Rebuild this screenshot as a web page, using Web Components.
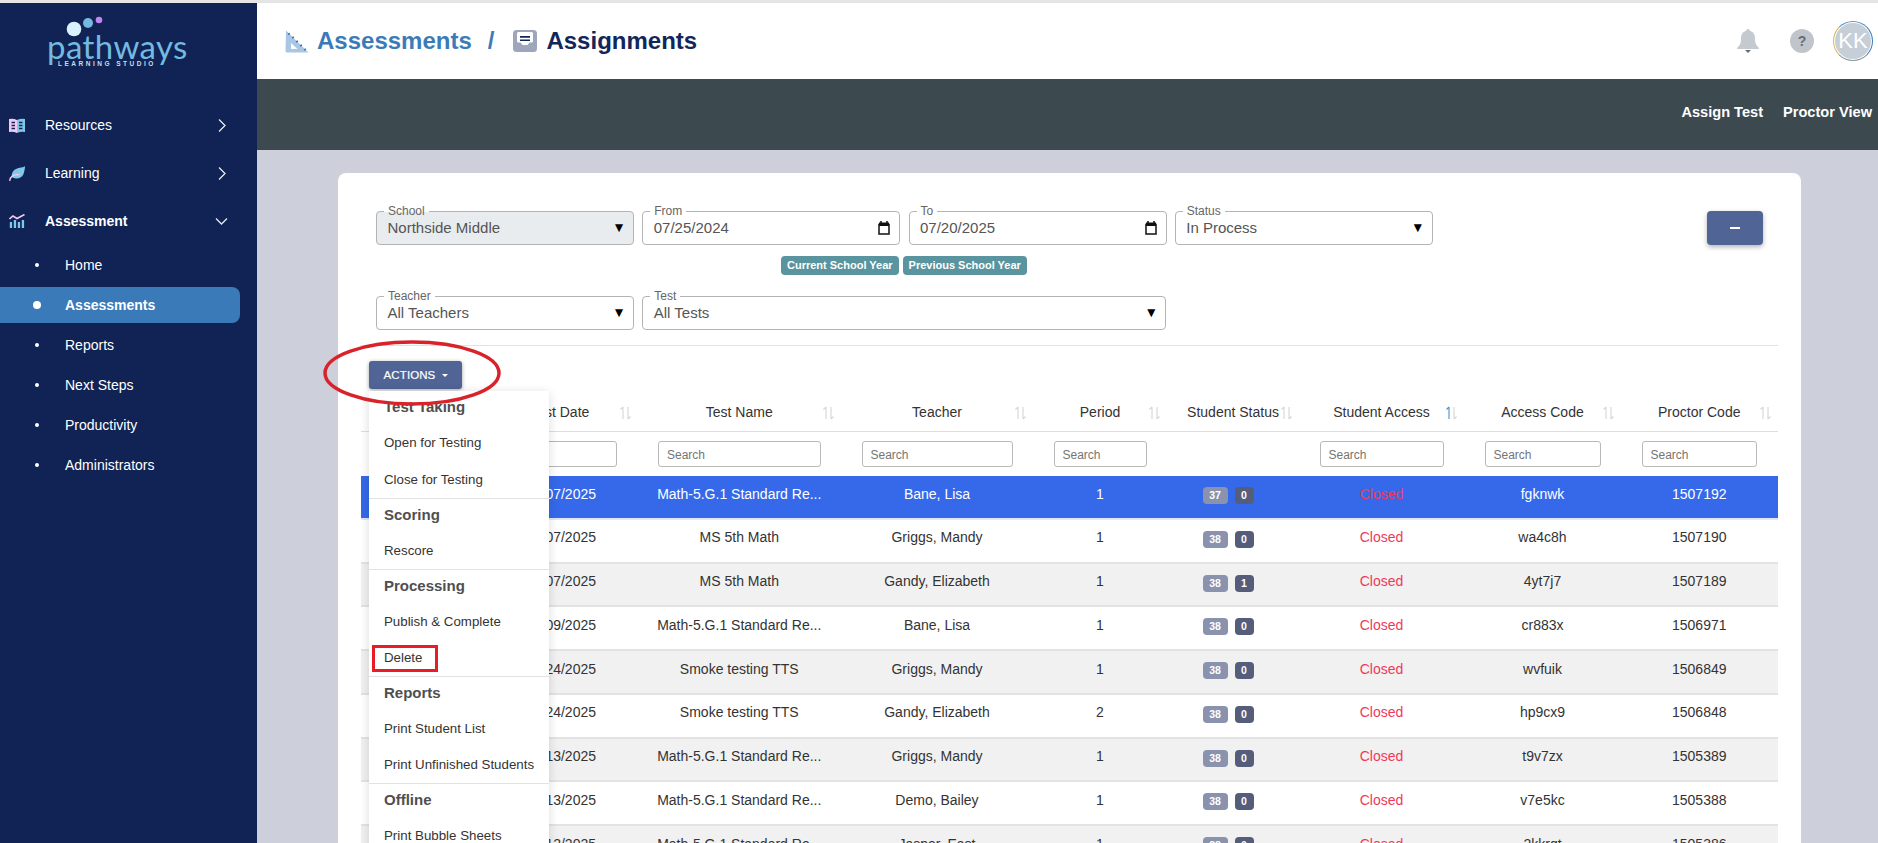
<!DOCTYPE html>
<html lang="en">
<head>
<meta charset="utf-8">
<title>Assignments</title>
<style>
  html, body { margin: 0; height: 843px; overflow: hidden; background: #cdcfdb; }
  body { font-family: "Liberation Sans", Arial, sans-serif; font-size: 14px; color: #333; }
  .app { display: grid; grid-template-columns: 257px 1fr; height: 840px; border-top: 3px solid #e5e5e5; }
  .main { min-width: 0; display: flex; flex-direction: column; }
</style>
</head>
<body>
<div class="app">
  <x-sidebar>
    <x-nav-item label="Resources" chevron="right">
      <svg slot="icon" width="16" height="15" viewBox="0 0 16 15">
        <path d="M0 1 Q4 0 8 2 V15 Q4 13 0 14 Z" fill="#f3c9f0"/>
        <path d="M16 1 Q12 0 8 2 V15 Q12 13 16 14 Z" fill="#7fc8ea"/>
        <path d="M2.500 4.500h3.500M2.500 7.500h3.500M2.500 10.500h3.500M10 4.500h3.500M10 7.500h3.500M10 10.500h3.500" stroke="#12265a" stroke-width="1.300"/>
      </svg>
    </x-nav-item>
    <x-nav-item label="Learning" chevron="right">
      <svg slot="icon" width="16" height="15" viewBox="0 0 16 15">
        <path d="M16 0 C15 2 10 1 7 3 C3 5 2 9 3.500 11.500 C8 14 13 12 14.500 8 C15.500 5 16 2 16 0 Z" fill="#7fc8ea"/>
        <path d="M0.700 15 C1 10.500 5 8.500 10 8.500" fill="none" stroke="#f3c9f0" stroke-width="1.300" stroke-linecap="round"/>
      </svg>
    </x-nav-item>
    <x-nav-item label="Assessment" chevron="down" bold>
      <svg slot="icon" width="16" height="14" viewBox="0 0 16 14">
        <path d="M0.500 5 L4 2 L8 4.500 L15.500 0.500" fill="none" stroke="#f3c9f0" stroke-width="1.600"/>
        <path d="M0.800 8h2.300v6H0.800zM4.800 6h2.300v8H4.800zM8.800 8h2.300v6H8.800zM12.800 6h2.300v8h-2.300z" fill="#7fc8ea"/>
      </svg>
    </x-nav-item>
    <x-nav-sub label="Home"></x-nav-sub>
    <x-nav-sub label="Assessments" active></x-nav-sub>
    <x-nav-sub label="Reports"></x-nav-sub>
    <x-nav-sub label="Next Steps"></x-nav-sub>
    <x-nav-sub label="Productivity"></x-nav-sub>
    <x-nav-sub label="Administrators"></x-nav-sub>
  </x-sidebar>
  <div class="main">
    <x-topbar></x-topbar>
    <x-subbar></x-subbar>
    <x-card>
      <x-filters></x-filters>
      <x-actions></x-actions>
      <x-assign-table></x-assign-table>
    </x-card>
  </div>
</div>

<script>
class XSidebar extends HTMLElement {
  constructor() {
    super();
    this.attachShadow({ mode: 'open' }).innerHTML = `
    <style>
      :host { display: block; background: #102354; overflow: hidden; }
      .logo { height: 98px; box-sizing: border-box; padding: 13px 0 0 47px; color: #74b9e0; }
      .dots { display: block; margin-left: 17px; }
      .word { font-family: Lato, "Open Sans", sans-serif; font-weight: 400; font-size: 33px; line-height: 30px; letter-spacing: 0.400px; margin-top: -11px; }
      .sub { font-size: 6.500px; font-weight: 700; letter-spacing: 2.500px; line-height: 8px; margin: -1px 0 0 11px; color: #c9dcec; }
    </style>
    <div class="logo">
      <svg class="dots" width="60" height="26" viewBox="0 0 60 26">
        <circle cx="10" cy="13" r="7.300" fill="#d9f2fb"/>
        <circle cx="24" cy="7" r="5" fill="#74b9e0"/>
        <circle cx="35" cy="4" r="3.300" fill="#c185ee"/>
      </svg>
      <div class="word">pathways</div>
      <div class="sub">LEARNING STUDIO</div>
    </div>
    <slot></slot>`;
  }
}

class XNavItem extends HTMLElement {
  constructor() {
    super();
    this.attachShadow({ mode: 'open' });
  }
  connectedCallback() {
    const down = this.getAttribute('chevron') === 'down';
    const chev = down
      ? '<path d="M1 1.500 L6.500 7 L12 1.500" />'
      : '<path d="M2 0.500 L8 6.500 L2 12.500" />';
    this.shadowRoot.innerHTML = `
    <style>
      :host { display: flex; align-items: center; height: 48px; color: #fff; font-size: 14px; font-weight: ${this.hasAttribute('bold') ? 700 : 400}; }
      .ico { width: 16px; margin: 0 20px 0 9px; display: flex; }
      .txt { flex: 1; }
      svg { display: block; margin-right: ${down ? 29 : 31}px; fill: none; stroke: #e6e9f2; stroke-width: 1.300; }
    </style>
    <span class="ico"><slot name="icon"></slot></span>
    <span class="txt">${this.getAttribute('label')}</span>
    <svg width="${down ? 13 : 9}" height="${down ? 9 : 13}">${chev}</svg>`;
  }
}

class XNavSub extends HTMLElement {
  constructor() {
    super();
    this.attachShadow({ mode: 'open' });
  }
  connectedCallback() {
    const on = this.hasAttribute('active');
    this.shadowRoot.innerHTML = `
    <style>
      :host { display: block; height: 40px; padding: 2px 17px 2px 0; box-sizing: border-box; color: #fff; font-size: 14px; }
      .row { height: 36px; display: flex; align-items: center; border-radius: 0 8px 8px 0; background: ${on ? '#3a7ab8' : 'transparent'}; font-weight: ${on ? 700 : 400}; }
      i { width: ${on ? 8 : 4}px; height: ${on ? 8 : 4}px; border-radius: 50%; background: #fff; margin-left: ${on ? 33 : 35}px; margin-right: ${on ? 24 : 26}px; }
    </style>
    <div class="row"><i></i><span>${this.getAttribute('label')}</span></div>`;
  }
}

class XTopbar extends HTMLElement {
  constructor() {
    super();
    this.attachShadow({ mode: 'open' }).innerHTML = `
    <style>
      :host { display: flex; align-items: center; height: 76px; background: #fff; padding: 0 5px 0 28px; flex: none; }
      .crumbs { display: flex; align-items: center; flex: 1; font-size: 24px; font-weight: 700; }
      .a { color: #3a7bb8; margin: 0 16px 0 8px; }
      .sep { color: #3a7bb8; margin-right: 19px; font-weight: 700; }
      .b { color: #12265a; margin-left: 9px; }
      .tools { display: flex; align-items: center; }
      .help { width: 24px; height: 24px; border-radius: 50%; background: #c0c5cc; color: #656c78; font-size: 14px; font-weight: 700; text-align: center; line-height: 24px; margin: 0 19px 0 31px; }
      .avatar { width: 36px; height: 36px; border-radius: 50%; background: #c6ced8; color: #fff; font-size: 22px; text-align: center; line-height: 36px; border: 2px solid transparent; background-clip: padding-box; position: relative; }
      .ring { position: absolute; inset: -2px; border-radius: 50%; border: 1px solid; border-color: #5c93c4 #3a7bb8 #8a9a9c #d9b95a; }
    </style>
    <div class="crumbs">
      <svg width="24" height="23" viewBox="0 0 24 23">
        <path d="M1 0.500 L23.500 22.500 H2 Q0.500 22.500 0.500 21 Z" fill="#a9c6e4"/>
        <path d="M6 13 L12.500 19 H6 Z" fill="#fff"/>
        <path d="M3 4.500l2 -1M7 8l2 -1M11 12l2 -1M15 16l2 -1M19 20l2 -1" stroke="#3a7bb8" stroke-width="1.500"/>
      </svg>
      <span class="a">Assessments</span>
      <span class="sep">/</span>
      <svg width="24" height="22" viewBox="0 0 24 22">
        <rect width="24" height="22" rx="3.500" fill="#9ea6bb"/>
        <path d="M4 3.500 Q4 2 5.500 2 H18.500 Q20 2 20 3.500 V11 Q20 12.500 18.500 12.500 H16.500 L14.500 15 H9.500 L7.500 12.500 H5.500 Q4 12.500 4 11 Z" fill="#fff"/>
        <path d="M7 6h10v1.800H7zM7 9.500h10v1.500H7z" fill="#12265a"/>
      </svg>
      <span class="b">Assignments</span>
    </div>
    <div class="tools">
      <svg width="22" height="24" viewBox="0 0 22 24">
        <path d="M11 0 Q13 0 13 2 C17 3 18 6 18 10 C18 14 19 16 22 19 Q22 20 21 20 H1 Q0 20 0 19 C3 16 4 14 4 10 C4 6 5 3 9 2 Q9 0 11 0 Z" fill="#c5cad0"/>
        <path d="M8 21 H14 L11 24 Z" fill="#656c78"/>
      </svg>
      <div class="help">?</div>
      <div class="avatar"><span class="ring"></span>KK</div>
    </div>`;
  }
}

class XSubbar extends HTMLElement {
  constructor() {
    super();
    this.attachShadow({ mode: 'open' }).innerHTML = `
    <style>
      :host { display: flex; justify-content: flex-end; align-items: center; gap: 20px; height: 71px; box-sizing: border-box; background: #3c4a50; color: #fff; font-weight: 700; font-size: 14.600px; padding: 0 6px 5px 0; flex: none; }
    </style>
    <span>Assign Test</span><span>Proctor View</span>`;
  }
}

class XCard extends HTMLElement {
  constructor() {
    super();
    this.attachShadow({ mode: 'open' }).innerHTML = `
    <style>
      :host { display: block; flex: 1; margin: 23px 77px 0 81px; background: #fff; border-radius: 8px 8px 0 0; padding: 38px 38px 0; }
    </style>
    <slot></slot>`;
  }
}

class XField extends HTMLElement {
  constructor() {
    super();
    this.attachShadow({ mode: 'open' });
  }
  connectedCallback() {
    const off = this.hasAttribute('disabled');
    const date = this.getAttribute('kind') === 'date';
    const tail = date
      ? `<svg width="12" height="14" viewBox="0 0 12 14"><path d="M1 3.500 H11 V13 H1 Z" fill="none" stroke="#111" stroke-width="1.500"/><path d="M1 1.500H11V5H1z" fill="#111"/><path d="M3 0v2M9 0v2" stroke="#111" stroke-width="1.500"/></svg>`
      : `<span class="arrow">▼</span>`;
    this.shadowRoot.innerHTML = `
    <style>
      :host { display: block; }
      .box { position: relative; height: 34px; box-sizing: border-box; display: flex; align-items: center; justify-content: space-between; padding: 0 ${date ? 9 : 10}px 1px 10.500px; border: 1px solid #b4b4b4; border-radius: 4px; background: ${off ? '#e9ecef' : '#fff'}; color: #555; font-size: 15px; }
      .lab { position: absolute; top: -7px; left: 7px; padding: 0 4px; font-size: 12px; line-height: 13px; color: #666; background: ${off ? 'linear-gradient(#fff 50%, #e9ecef 50%)' : '#fff'}; }
      .arrow { color: #000; font-size: 10.500px; font-family: "DejaVu Sans", sans-serif; line-height: 1; }
      svg { display: block; }
    </style>
    <div class="box"><span class="lab">${this.getAttribute('label')}</span><span>${this.getAttribute('value')}</span>${tail}</div>`;
  }
}

class XFilters extends HTMLElement {
  constructor() {
    super();
    this.attachShadow({ mode: 'open' }).innerHTML = `
    <style>
      :host { display: block; }
      .row { display: flex; gap: 8.250px; }
      x-field { width: 258px; }
      .wide { width: 524px; }
      .minus { margin-left: auto; width: 56px; height: 34px; border-radius: 4px; background: #506495; box-shadow: 0 2px 5px rgba(0,0,0,.3); display: flex; align-items: center; justify-content: center; }
      .minus i { width: 10px; height: 2.500px; background: #fff; }
      .pills { display: flex; gap: 4px; margin: 11px 0 21px 405px; }
      .pills span { background: #5a949e; color: #fff; font-size: 11px; font-weight: 700; line-height: 19px; padding: 0 6px; border-radius: 4px; white-space: nowrap; }
      hr { border: 0; border-top: 1px solid #e2e2e2; margin: 15px -15px; }
    </style>
    <div class="row">
      <x-field label="School" value="Northside Middle" disabled></x-field>
      <x-field label="From" value="07/25/2024" kind="date"></x-field>
      <x-field label="To" value="07/20/2025" kind="date"></x-field>
      <x-field label="Status" value="In Process"></x-field>
      <div class="minus"><i></i></div>
    </div>
    <div class="pills"><span>Current School Year</span><span>Previous School Year</span></div>
    <div class="row">
      <x-field label="Teacher" value="All Teachers"></x-field>
      <x-field class="wide" label="Test" value="All Tests"></x-field>
    </div>
    <hr>`;
  }
}

class XActions extends HTMLElement {
  constructor() {
    super();
    this.attachShadow({ mode: 'open' }).innerHTML = `
    <style>
      :host { display: block; position: relative; height: 28px; margin-left: -7px; width: 93px; z-index: 5; }
      button { all: unset; box-sizing: border-box; display: flex; align-items: center; justify-content: center; gap: 7px; width: 93px; height: 28px; padding-left: 1px; background: #506495; border-radius: 3px; color: #fff; font-size: 11.500px; font-weight: 400; box-shadow: 0 1px 4px rgba(0,0,0,.35); letter-spacing: .1px; -webkit-text-stroke: .2px #fff; }
      button i { border: 3px solid transparent; border-top-color: #fff; border-bottom: 0; width: 0; height: 0; }
      .menu { position: absolute; top: 30px; left: 0; width: 180px; height: 480px; background: #fff; box-shadow: 0 2px 10px rgba(0,0,0,.14); color: #333; font-size: 13.300px; }
      h4 { margin: 0; height: 34px; line-height: 32px; padding-left: 15px; font-size: 15px; font-weight: 700; color: #4f4f4f; }
      a { display: block; height: 36px; line-height: 35px; padding-left: 15px; }
      section { border-bottom: 1px solid #e2e2e2; }
      .first a { height: 36.500px; }
      .oval { position: absolute; left: -46px; top: -21px; pointer-events: none; }
      .mark { position: absolute; left: 3px; top: 254px; width: 66px; height: 27px; box-sizing: border-box; border: 3px solid #e81c24; }
    </style>
    <button>ACTIONS<i></i></button>
    <div class="menu">
      <section class="first"><h4>Test Taking</h4><a>Open for Testing</a><a>Close for Testing</a></section>
      <section><h4>Scoring</h4><a>Rescore</a></section>
      <section><h4>Processing</h4><a>Publish &amp; Complete</a><a>Delete</a></section>
      <section><h4>Reports</h4><a>Print Student List</a><a>Print Unfinished Students</a></section>
      <section><h4>Offline</h4><a>Print Bubble Sheets</a></section>
      <div class="mark"></div>
    </div>
    <svg class="oval" width="178" height="66" viewBox="0 0 178 66"><ellipse cx="89" cy="33" rx="87" ry="31" fill="none" stroke="#d9232a" stroke-width="3.500"/></svg>`;
  }
}

const COLS = '121px 155.5px 203.5px 192px 134px 132px 165px 157px 156.5px';
const ROWS = [
  ['07/2025', 'Math-5.G.1 Standard Re...', 'Bane, Lisa', '1', '37', '0', 'fgknwk', '1507192'],
  ['07/2025', 'MS 5th Math', 'Griggs, Mandy', '1', '38', '0', 'wa4c8h', '1507190'],
  ['07/2025', 'MS 5th Math', 'Gandy, Elizabeth', '1', '38', '1', '4yt7j7', '1507189'],
  ['09/2025', 'Math-5.G.1 Standard Re...', 'Bane, Lisa', '1', '38', '0', 'cr883x', '1506971'],
  ['24/2025', 'Smoke testing TTS', 'Griggs, Mandy', '1', '38', '0', 'wvfuik', '1506849'],
  ['24/2025', 'Smoke testing TTS', 'Gandy, Elizabeth', '2', '38', '0', 'hp9cx9', '1506848'],
  ['13/2025', 'Math-5.G.1 Standard Re...', 'Griggs, Mandy', '1', '38', '0', 't9v7zx', '1505389'],
  ['13/2025', 'Math-5.G.1 Standard Re...', 'Demo, Bailey', '1', '38', '0', 'v7e5kc', '1505388'],
  ['12/2025', 'Math-5.G.1 Standard Re...', 'Jasper, East', '1', '38', '0', '2kkrqt', '1505386'],
];

function sortIcon(active) {
  return `<svg class="sort" width="11" height="14" viewBox="0 0 11 14">
    <path d="M3 13V1M3 1L0.500 3.500" fill="none" stroke="${active ? '#4a90d0' : '#d6d6d6'}" stroke-width="1.100"/>
    <path d="M8 1V13M8 13L10.500 10.500" fill="none" stroke="#d6d6d6" stroke-width="1.100"/>
  </svg>`;
}

class XAssignTable extends HTMLElement {
  constructor() {
    super();
    this.attachShadow({ mode: 'open' });
  }
  connectedCallback() {
    const heads = ['Test Date', 'Test Name', 'Teacher', 'Period', 'Student Status', 'Student Access', 'Access Code', 'Proctor Code'];
    const rows = ROWS.map((r, i) => `
      <div class="row${i === 0 ? ' sel' : ''}${i % 2 === 0 && i ? ' alt' : ''}">
        <div></div>
        <div class="date">${r[0]}</div>
        <div>${r[1]}</div><div>${r[2]}</div><div>${r[3]}</div>
        <div class="bad"><span class="b1">${r[4]}</span><span class="b2">${r[5]}</span></div>
        <div class="closed">Closed</div>
        <div>${r[6]}</div><div>${r[7]}</div>
      </div>`).join('');
    this.shadowRoot.innerHTML = `
    <style>
      :host { display: block; margin: 5px -15px 0; color: #333; font-size: 14px; }
      .row, .head, .search { display: grid; grid-template-columns: ${COLS}; width: 1417px; }
      .head { height: 38px; box-sizing: border-box; border-bottom: 1px solid #dedede; }
      .head div { position: relative; text-align: center; line-height: 37px; }
      .sort { position: absolute; right: 7px; top: 12px; }
      .search { height: 44px; box-sizing: border-box; padding-top: 9px; }
      .search div { padding: 0 20.5px; box-sizing: border-box; min-width: 0; }
      .search span { display: block; height: 26px; box-sizing: border-box; border: 1px solid #b8b8b8; border-radius: 3px; font-size: 12px; line-height: 26px; padding-left: 8px; color: #757575; background: #fff; }
      .row { height: 43.75px; box-sizing: border-box; border-bottom: 2px solid #e3e3e3; text-align: center; line-height: 17px; }
      .row > div { padding-top: 9.5px; white-space: nowrap; overflow: hidden; }
      .alt { background: #f1f1f1; }
      .sel { background: #3569e9; color: #fff; border-bottom-color: #dfe6f7; }
      .date { text-align: right; padding-right: 41.5px; }
      .closed { color: #f0395a; }
      .bad { display: flex; justify-content: center; gap: 7px; padding-right: 10px; padding-top: 11px !important; }
      .bad span { height: 17px; border-radius: 4px; color: #fff; font-size: 10.500px; font-weight: 700; line-height: 17px; text-align: center; }
      .b1 { width: 25px; background: #8a92ad; }
      .b2 { width: 19px; background: #555d7a; }
    </style>
    <div class="head"><div></div>${heads.map(h => `<div>${h}${sortIcon(h === 'Student Access')}</div>`).join('')}</div>
    <div class="search"><div></div>${heads.map(h => h === 'Student Status' ? '<div></div>' : '<div><span>Search</span></div>').join('')}</div>
    ${rows}`;
  }
}

customElements.define('x-sidebar', XSidebar);
customElements.define('x-nav-item', XNavItem);
customElements.define('x-nav-sub', XNavSub);
customElements.define('x-topbar', XTopbar);
customElements.define('x-subbar', XSubbar);
customElements.define('x-card', XCard);
customElements.define('x-field', XField);
customElements.define('x-filters', XFilters);
customElements.define('x-actions', XActions);
customElements.define('x-assign-table', XAssignTable);
</script>
</body>
</html>
